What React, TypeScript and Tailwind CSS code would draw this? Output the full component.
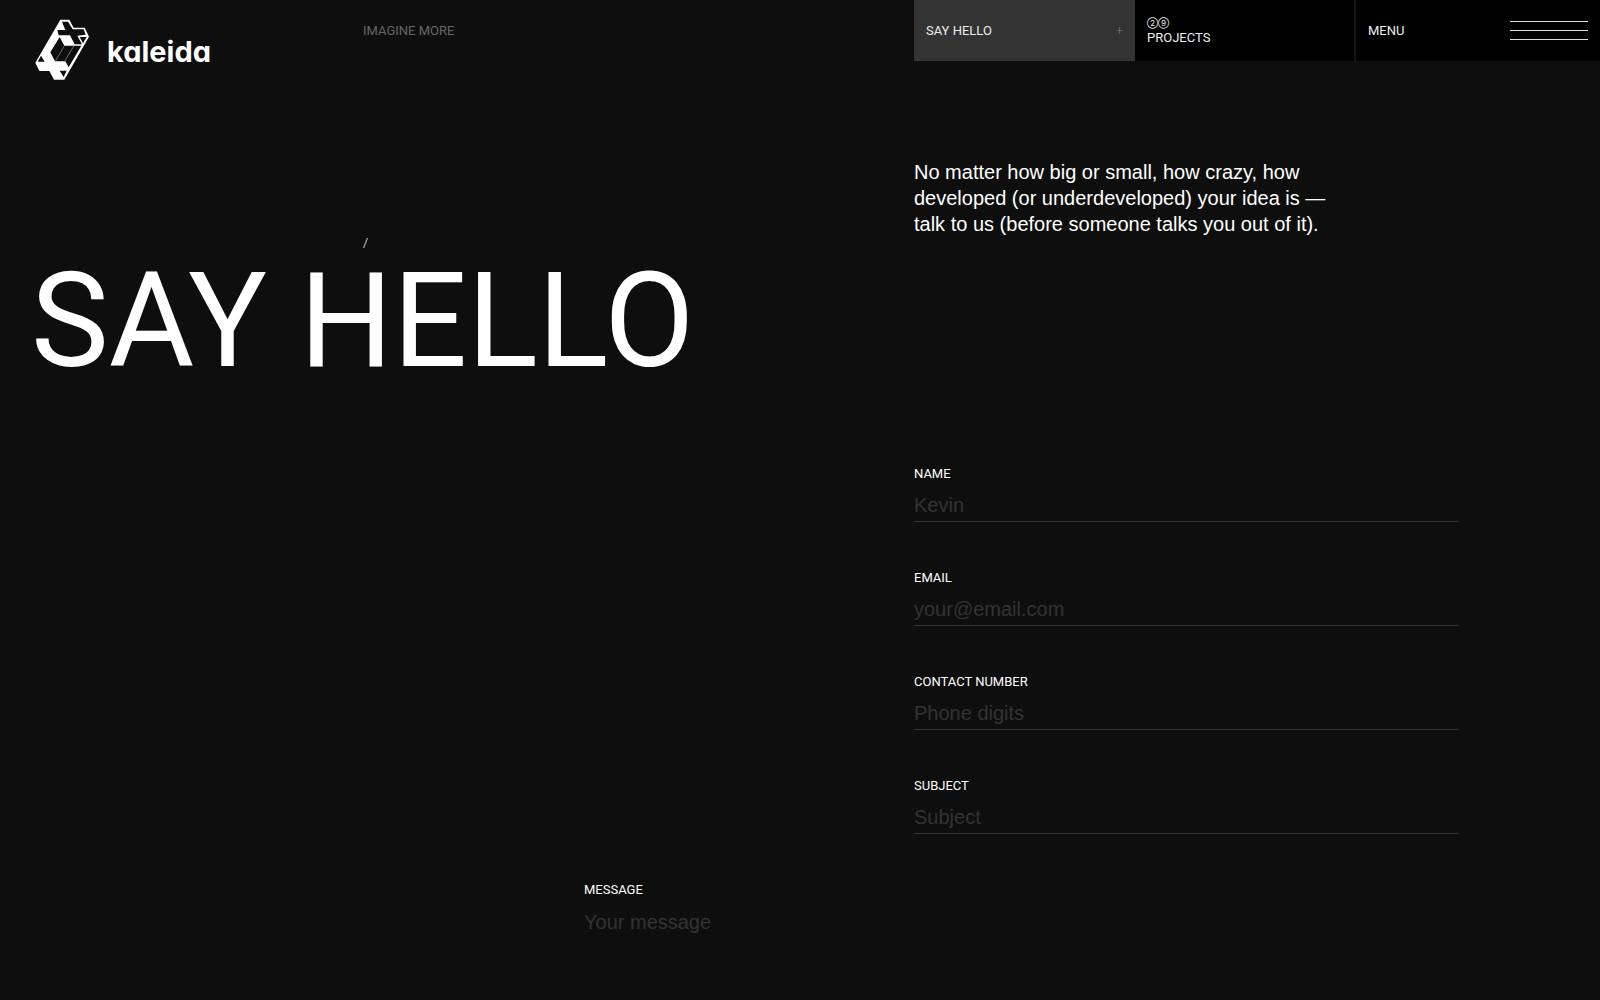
import React from 'react'

const fields = [
  { id: 'name', label: 'NAME', type: 'text', placeholder: 'Kevin' },
  { id: 'email', label: 'EMAIL', type: 'email', placeholder: 'your@email.com' },
  { id: 'phone', label: 'CONTACT NUMBER', type: 'tel', placeholder: 'Phone digits' },
  { id: 'subject', label: 'SUBJECT', type: 'text', placeholder: 'Subject' },
]

const Logo = () => {
  return (
    <a href="/" className="flex w-fit items-center gap-[18px] pt-[19px] pl-[35px] text-white">
      <svg viewBox="44 28 162 183" className="h-[61px] w-[54px]" aria-hidden="true">
        <path fill="#fff" d="M120 30h27l13 24h33l13 27-74 129h-31l-14-26H57L45 159z" />
        <g fill="#0e0e0e">
          <path d="M125 36h18l14 23h33l6 16-25 3 14 26h-22l-14-27h-34l-4-16h24z" />
          <path d="M178 82h21l-11 19z" />
          <path d="M118 82l14 26h51l-38 65-10-18h-31l-14-27z" />
          <path d="M62 138l11 18H52z" />
          <path d="M118 183h21l-9 19z" />
        </g>
        <path d="M132 108l-27 47M161 108l-28 47" stroke="#999" strokeWidth="2" />
      </svg>
      <span className="pt-1 font-[Inter] text-[29px] leading-[40px] font-bold [font-feature-settings:'cv11']">
        kaleida
      </span>
    </a>
  )
}

const Header = () => {
  return (
    <header className="grid grid-cols-[363fr_551fr_686fr] items-start">
      <Logo />
      <p className="pt-[21px] text-[13px] leading-5 text-[#666]">IMAGINE MORE</p>
      <nav className="grid h-[61px] grid-cols-[221fr_221fr_244fr] text-[13px] leading-4 text-[#eee]">
        <a href="/contact" className="flex items-center justify-between bg-[#333] px-3">
          <span>SAY HELLO</span>
          <span className="font-light text-[#777]">+</span>
        </a>
        <a href="/projects" className="flex flex-col justify-center border-r-2 border-[#161616] bg-black px-3">
          <span className="font-[Inter] text-[8px] leading-[14px]">②⑨</span>
          <span>PROJECTS</span>
        </a>
        <button type="button" className="flex items-center justify-between bg-black px-3">
          <span>MENU</span>
          <span className="flex w-[78px] flex-col gap-2">
            <span className="h-px bg-[#ddd]" />
            <span className="h-px bg-[#ddd]" />
            <span className="h-px bg-[#ddd]" />
          </span>
        </button>
      </nav>
    </header>
  )
}

const App = () => {
  return (
    <div className="min-h-screen bg-[#0e0e0e] font-[Roboto,'Liberation_Sans',sans-serif] text-white">
      <Header />
      <main>
        <section className="grid grid-cols-[914fr_686fr] pt-[79px]">
          <div className="pt-[76px] pl-[31px]">
            <span className="block pl-[332px] text-[13px] leading-4 font-light">/</span>
            <h1 className="pt-1 text-[131px] leading-[132px] whitespace-nowrap">SAY HELLO</h1>
          </div>
          <p className="max-w-[420px] font-['Liberation_Sans',sans-serif] text-[20px] leading-[26px]">
            No matter how big or small, how crazy, how developed (or underdeveloped) your idea is — talk to us (before
            someone talks you out of it).
          </p>
        </section>

        <form className="pt-[79px]">
          <div className="grid grid-cols-[914fr_544fr_142fr]">
            <div className="col-start-2 flex flex-col gap-12">
              {fields.map((field) => (
                <div key={field.id} className="flex flex-col gap-2">
                  <label htmlFor={field.id} className="text-[13px] leading-4">
                    {field.label}
                  </label>
                  <input
                    id={field.id}
                    type={field.type}
                    placeholder={field.placeholder}
                    className="h-8 border-b border-[#333] bg-transparent font-['Liberation_Sans',sans-serif] text-[20px] outline-none placeholder:text-[#333]"
                  />
                </div>
              ))}
            </div>
          </div>
          <div className="grid grid-cols-[584fr_874fr_142fr] pt-12">
            <div className="col-start-2 flex flex-col gap-2">
              <label htmlFor="message" className="text-[13px] leading-4">
                MESSAGE
              </label>
              <textarea
                id="message"
                rows={2}
                placeholder="Your message"
                className="resize-none bg-transparent font-['Liberation_Sans',sans-serif] text-[20px] leading-8 outline-none placeholder:text-[#333]"
              />
            </div>
          </div>
        </form>
      </main>
    </div>
  )
}

export default App
